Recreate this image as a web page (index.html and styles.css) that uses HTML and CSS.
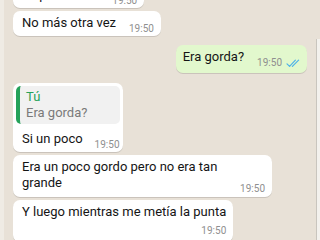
FILE: index.html
```html
<!DOCTYPE html>
<html lang="es">
<head>
    <meta charset="UTF-8">
    <meta name="viewport" content="width=device-width, initial-scale=1.0">
    <title>Chat</title>
    <link rel="stylesheet" href="styles.css">
</head>
<body>
    <div class="screen">
        <div class="edge-left"></div>

        <!-- Conversation -->
        <main class="chat">
            <div class="bubble in">
                <div class="line">
                    <span class="text">Es pesado eh</span>
                    <span class="time">19:50</span>
                </div>
            </div>

            <div class="bubble in">
                <div class="line">
                    <span class="text">No más otra vez</span>
                    <span class="time">19:50</span>
                </div>
            </div>

            <div class="bubble out group">
                <div class="line">
                    <span class="text">Era gorda?</span>
                    <span class="time">19:50</span>
                    <svg class="ticks" width="14" height="9" viewBox="0 0 14 9">
                        <path d="M1 4.8 L3.6 7.4 L9.4 1.2" />
                        <path d="M6.4 7.4 L12.6 1.2" />
                    </svg>
                </div>
            </div>

            <div class="bubble in reply group">
                <div class="quote">
                    <div class="quote-name">Tú</div>
                    <div class="quote-text">Era gorda?</div>
                </div>
                <div class="line">
                    <span class="text">Si un poco</span>
                    <span class="time">19:50</span>
                </div>
            </div>

            <div class="bubble in wide">
                <div class="line">
                    <span class="text">Era un poco gordo pero no era tan grande</span>
                    <span class="time">19:50</span>
                </div>
            </div>

            <div class="bubble in">
                <div class="stack">
                    <span class="text">Y luego mientras me metía la punta</span>
                    <span class="time">19:50</span>
                </div>
            </div>
        </main>

        <div class="edge-right"></div>
    </div>
</body>
</html>
```

FILE: styles.css
```css
:root {
    --chat-bg: #e8e1d7;
    --bubble-in: #ffffff;
    --bubble-out: #e2f8cd;
    --text-color: #151515;
    --time-color: #8f8f8f;
    --green: #25a25a;
    --tick-blue: #4fb3e8;
    --font-family: Roboto, 'Noto Sans', sans-serif;
}

body {
    margin: 0;
    width: 320px;
    height: 240px;
    overflow: hidden;
    background-color: var(--chat-bg);
    font-family: var(--font-family);
}

.screen {
    display: flex;
    height: 240px;
}

.edge-left {
    width: 4px;
    background-color: #efebe4;
}

.edge-right {
    width: 3px;
    margin-top: 39px;
    border-left: 1px solid #c9c5be;
    background-color: #f3f1ed;
}

/* Conversation column */
.chat {
    flex: 1;
    display: flex;
    flex-direction: column;
    align-items: flex-start;
    padding: 0 9px;
    margin-top: -17px;
}

.bubble {
    background-color: var(--bubble-in);
    border-radius: 7px;
    padding: 4px 7px 5px 9px;
    margin-top: 3px;
    box-shadow: 0 1px 0.5px rgba(0, 0, 0, 0.13);
    color: var(--text-color);
    font-size: 13px;
    line-height: 16px;
    max-width: 259px;
    box-sizing: border-box;
}

.bubble:first-child {
    margin-top: 0;
}

.bubble.group {
    margin-top: 9px;
}

.bubble.out {
    align-self: flex-end;
    background-color: var(--bubble-out);
    padding: 4px 7px 8px 7px;
}

.bubble.wide {
    padding-bottom: 6px;
}

.line {
    display: flex;
    align-items: flex-end;
}

.stack {
    display: flex;
    flex-direction: column;
}

.time {
    flex-shrink: 0;
    margin-left: 13px;
    margin-bottom: -4px;
    font-size: 10px;
    line-height: 12px;
    color: var(--time-color);
    white-space: nowrap;
}

.stack .time {
    align-self: flex-end;
    margin: 5px 0 0 0;
}

.ticks {
    flex-shrink: 0;
    margin: 0 0 -3px 4px;
    fill: none;
    stroke: var(--tick-blue);
    stroke-width: 1.2;
    stroke-linecap: round;
    stroke-linejoin: round;
}

/* Quoted reply */
.bubble.reply {
    margin-top: 10px;
    padding: 3px 3px 5px 3px;
}

.quote {
    background-color: #f1f1f1;
    border-left: 4px solid var(--green);
    border-radius: 5px;
    padding: 3px 8px 3px 6px;
}

.quote-name {
    color: var(--green);
}

.quote-text {
    color: #7a7a7a;
}

.reply .line {
    margin-top: 7px;
    padding-left: 6px;
}

.reply .time {
    margin-left: 12px;
}
```
